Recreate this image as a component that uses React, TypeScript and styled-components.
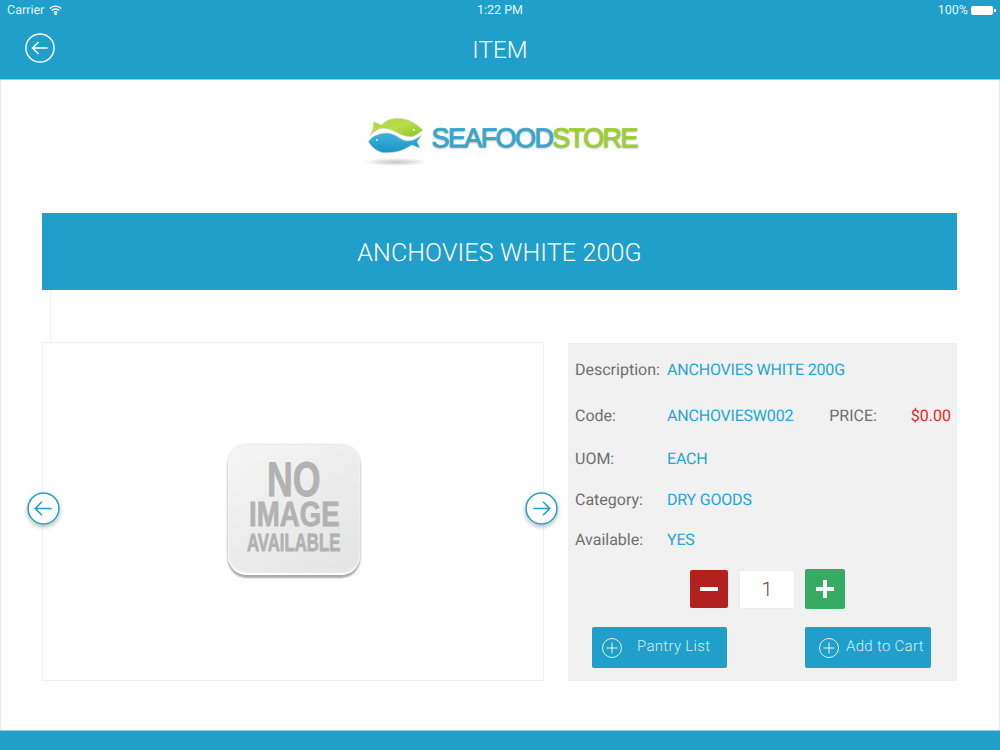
import styled, { createGlobalStyle } from 'styled-components';

const BLUE = '#1f9fc9';

const GlobalStyle = createGlobalStyle`
  html, body {
    margin: 0;
    padding: 0;
    background: #ffffff;
  }
  body {
    font-family: Roboto, "Liberation Sans", sans-serif;
    text-rendering: geometricPrecision;
  }
`;

const Page = styled.div`
  width: 1000px;
  height: 750px;
  display: flex;
  flex-direction: column;
  overflow: hidden;
`;

const Header = styled.header`
  height: 79px;
  background: ${BLUE};
  color: #ffffff;
  display: flex;
  flex-direction: column;
  border-bottom: 1px solid #8fcfe4;
`;

const StatusBar = styled.div`
  height: 20px;
  padding: 0 7px;
  display: grid;
  grid-template-columns: 1fr auto 1fr;
  align-items: center;
  font-size: 12.5px;
  color: #e6f5fa;
`;

const Carrier = styled.div`
  display: flex;
  align-items: center;
  gap: 5px;
`;

const Battery = styled.div`
  display: flex;
  align-items: center;
  justify-content: flex-end;
  gap: 3px;
`;

const BatteryBody = styled.span`
  width: 22px;
  height: 9px;
  background: #ffffff;
  border-radius: 2px;
  position: relative;
  &::after {
    content: '';
    position: absolute;
    right: -3px;
    top: 3px;
    width: 2px;
    height: 3px;
    background: #ffffff;
  }
`;

const NavBar = styled.div`
  flex: 1;
  display: grid;
  grid-template-columns: 1fr auto 1fr;
  align-items: center;
  padding: 0 25px;
`;

const NavTitle = styled.h1`
  margin: 0;
  font-size: 24px;
  font-weight: 300;
  letter-spacing: 0.2px;
`;

const BackButton = styled.div`
  width: 30px;
  height: 30px;
  margin-top: -3px;
`;

const Content = styled.main`
  flex: 1;
  border-left: 1px solid #e8e8e8;
  border-right: 1px solid #e8e8e8;
  padding: 0 42px 0 41px;
  display: flex;
  flex-direction: column;
`;

const LogoRow = styled.div`
  height: 133px;
  box-sizing: border-box;
  display: flex;
  justify-content: center;
  align-items: center;
  gap: 2px;
  padding-bottom: 9px;
`;

const LogoText = styled.div`
  width: 206px;
  white-space: nowrap;
  font-family: "Liberation Sans", Arial, sans-serif;
  font-size: 27px;
  font-weight: 400;
  letter-spacing: -1.6px;
  color: #36a6cc;
  -webkit-text-stroke: 0.8px #36a6cc;
  text-shadow: 0 1px 2px rgba(60, 60, 60, 0.6);
  margin-top: -7px;
`;

const LogoGreen = styled.span`
  color: #9ccf30;
  -webkit-text-stroke: 0.8px #9ccf30;
`;

const TitleBar = styled.div`
  height: 77px;
  box-sizing: border-box;
  padding-top: 3px;
  background: ${BLUE};
  color: #ffffff;
  display: flex;
  align-items: center;
  justify-content: center;
  font-size: 25px;
  font-weight: 300;
  letter-spacing: 0.15px;
`;

const Connector = styled.div`
  height: 52px;
  margin-left: 8px;
  border-left: 1px solid #f0f0f0;
`;

const Columns = styled.div`
  display: flex;
  gap: 24px;
  height: 339px;
`;

const ImagePanel = styled.div`
  width: 502px;
  height: 339px;
  box-sizing: border-box;
  border: 1px solid #f0f0f0;
  position: relative;
  display: flex;
  align-items: center;
  justify-content: center;
`;

const NoImage = styled.div`
  width: 132px;
  height: 130px;
  margin: 0 0 3px 2px;
  border-radius: 19px;
  background: linear-gradient(145deg, #f6f6f6 0%, #ededed 45%, #e3e3e3 100%);
  box-shadow: 0 3px 2px #a9a9a9, 0 0 3px #c4c4c4, inset 0 -2px 2px #ffffff;
  display: flex;
  flex-direction: column;
  align-items: center;
  padding-top: 13px;
  box-sizing: border-box;
  color: #b2b2b2;
  font-family: "Liberation Sans", sans-serif;
  font-weight: 700;
`;

const NoImageLine = styled.span<{ $size: number; $height: number; $squeeze: number }>`
  display: inline-block;
  white-space: nowrap;
  font-size: ${(p) => p.$size}px;
  height: ${(p) => p.$height}px;
  line-height: ${(p) => p.$height}px;
  transform: scaleX(${(p) => p.$squeeze});
  -webkit-text-stroke: 0.8px #b2b2b2;
`;

const CarouselArrow = styled.div<{ $side: 'left' | 'right' }>`
  position: absolute;
  top: 149px;
  ${(p) => (p.$side === 'left' ? 'left: -16px;' : 'right: -15px;')}
  width: 33px;
  height: 33px;
  border-radius: 50%;
  background: #ffffff;
  box-shadow: 0 2px 4px rgba(0, 0, 0, 0.28);
`;

const DetailPanel = styled.section`
  flex: 1;
  margin-top: 1px;
  background: #f1f1f1;
  padding: 0 6px 0 7px;
  display: flex;
  flex-direction: column;
  font-size: 16px;
  color: #6f6f6f;
`;

const DetailRow = styled.div<{ $height: number }>`
  height: ${(p) => p.$height}px;
  display: flex;
  align-items: center;
`;

const Label = styled.span`
  width: 92px;
  flex: none;
`;

const Value = styled.span`
  color: #2aa5cf;
  letter-spacing: -0.2px;
`;

const PriceLabel = styled.span`
  margin-left: 36px;
`;

const Price = styled.span`
  margin-left: auto;
  color: #e02a2a;
`;

const QuantityRow = styled.div`
  height: 40px;
  margin-top: 10px;
  display: flex;
  justify-content: center;
  align-items: center;
  gap: 10px;
  padding-left: 9px;
`;

const StepButton = styled.div<{ $color: string; $size: number }>`
  width: ${(p) => p.$size}px;
  height: ${(p) => p.$size}px;
  background: ${(p) => p.$color};
  border-radius: 2px;
  display: flex;
  align-items: center;
  justify-content: center;
`;

const QuantityBox = styled.div`
  width: 56px;
  height: 39px;
  margin-left: 1px;
  box-sizing: border-box;
  background: #ffffff;
  border: 1px solid #ececec;
  display: flex;
  align-items: center;
  justify-content: center;
  font-size: 20px;
  font-weight: 300;
  color: #555555;
`;

const ActionRow = styled.div`
  margin-top: 18px;
  padding: 0 20px 0 17px;
  display: flex;
  justify-content: space-between;
`;

const ActionButton = styled.div<{ $width: number; $gap: number; $inset: number }>`
  width: ${(p) => p.$width}px;
  height: 41px;
  box-sizing: border-box;
  padding-left: ${(p) => p.$inset}px;
  background: ${BLUE};
  border-radius: 2px;
  color: #d5eef6;
  display: flex;
  align-items: center;
  gap: ${(p) => p.$gap}px;
  font-size: 15px;
  font-weight: 300;
  letter-spacing: 0.3px;
`;

const ActionLabel = styled.span`
  margin-bottom: 4px;
`;

const Footer = styled.footer`
  height: 19px;
  background: ${BLUE};
  border-top: 1px solid #8fcfe4;
  margin-top: auto;
`;

function ArrowCircle({ color, dir, size }: { color: string; dir: 'left' | 'right'; size: number }) {
  return (
    <svg width={size} height={size} viewBox="0 0 32 32" fill="none" stroke={color} strokeWidth="1.5">
      <circle cx="16" cy="16" r="15" />
      {dir === 'left' ? (
        <path d="M24 16H8M14.5 9.5L8 16l6.5 6.5" />
      ) : (
        <path d="M8 16h16M17.5 9.5L24 16l-6.5 6.5" />
      )}
    </svg>
  );
}

function PlusCircle() {
  return (
    <svg width="20" height="20" viewBox="0 0 20 20" fill="none" stroke="#e4f4f9" strokeWidth="1">
      <circle cx="10" cy="10" r="9.5" />
      <path d="M10 4.5v11M4.5 10h11" />
    </svg>
  );
}

function Wifi() {
  return (
    <svg width="13" height="10" viewBox="0 0 13 10" fill="none" stroke="#ffffff" strokeWidth="1.4">
      <path d="M0.8 3.4a8.2 8.2 0 0 1 11.4 0" />
      <path d="M2.8 5.5a5.3 5.3 0 0 1 7.4 0" />
      <path d="M4.8 7.4a2.5 2.5 0 0 1 3.4 0" />
      <circle cx="6.5" cy="9" r="0.6" fill="#ffffff" />
    </svg>
  );
}

function FishLogo() {
  return (
    <svg width="68" height="54" viewBox="0 0 68 54">
      <defs>
        <linearGradient id="greenFish" x1="0" y1="0" x2="1" y2="1">
          <stop offset="0" stopColor="#a6d52e" />
          <stop offset="0.5" stopColor="#b9dd4a" />
          <stop offset="1" stopColor="#8cc425" />
        </linearGradient>
        <linearGradient id="blueFish" x1="0" y1="0" x2="0" y2="1">
          <stop offset="0" stopColor="#3fb4da" />
          <stop offset="1" stopColor="#1c93c6" />
        </linearGradient>
        <radialGradient id="fishShadow">
          <stop offset="0" stopColor="#c4c4c4" />
          <stop offset="1" stopColor="#ffffff" />
        </radialGradient>
      </defs>
      <ellipse cx="33.7" cy="47" rx="33" ry="4" fill="url(#fishShadow)" />
      <path
        d="M11.3 6.7L19.7 10C24 5.5 29 3.3 34.7 3.3 41 3.3 46 4.5 49.7 6.7 54 9 58 12 60.7 15 57 18.5 53.5 21 49.7 21.7 45 22 41 20.5 36.3 18.3 31 15.5 26 13.3 21.3 13.3 16 13.5 11.5 17 8 21L11.3 13.3z"
        fill="url(#greenFish)"
        stroke="#d5d5d5"
        strokeWidth="0.6"
      />
      <path
        d="M6.3 26.7C8.5 23.5 11.5 21 14.7 20 19 18 24 17.5 28 18.3 33 19.5 37 23 41.3 25 44.5 26 48 26 51.3 25 54.5 23.5 57.5 21.5 59.7 20L55.3 26.7 58 33.3 49.7 30C45.5 33 40 35.7 34.7 36.7 30 37.7 25.5 38 21.3 37.7 15 36.5 10 32.5 6.3 26.7z"
        fill="url(#blueFish)"
        stroke="#d5d5d5"
        strokeWidth="0.6"
      />
      <circle cx="52" cy="15" r="0.9" fill="#ffffff" />
      <circle cx="15" cy="25" r="0.9" fill="#ffffff" />
    </svg>
  );
}

export default function App() {
  return (
    <Page>
      <GlobalStyle />
      <Header>
        <StatusBar>
          <Carrier>
            Carrier <Wifi />
          </Carrier>
          <span>1:22 PM</span>
          <Battery>
            100% <BatteryBody />
          </Battery>
        </StatusBar>
        <NavBar>
          <BackButton>
            <ArrowCircle color="#ffffff" dir="left" size={30} />
          </BackButton>
          <NavTitle>ITEM</NavTitle>
        </NavBar>
      </Header>
      <Content>
        <LogoRow>
          <FishLogo />
          <LogoText>
            SEAFOOD<LogoGreen>STORE</LogoGreen>
          </LogoText>
        </LogoRow>
        <TitleBar>ANCHOVIES WHITE 200G</TitleBar>
        <Connector />
        <Columns>
          <ImagePanel>
            <NoImage>
              <NoImageLine $size={49} $height={45} $squeeze={0.73}>NO</NoImageLine>
              <NoImageLine $size={35} $height={24} $squeeze={0.79}>IMAGE</NoImageLine>
              <NoImageLine $size={25} $height={33} $squeeze={0.67}>AVAILABLE</NoImageLine>
            </NoImage>
            <CarouselArrow $side="left">
              <ArrowCircle color={BLUE} dir="left" size={33} />
            </CarouselArrow>
            <CarouselArrow $side="right">
              <ArrowCircle color={BLUE} dir="right" size={33} />
            </CarouselArrow>
          </ImagePanel>
          <DetailPanel>
            <DetailRow $height={52}>
              <Label>Description:</Label>
              <Value>ANCHOVIES WHITE 200G</Value>
            </DetailRow>
            <DetailRow $height={41}>
              <Label>Code:</Label>
              <Value>ANCHOVIESW002</Value>
              <PriceLabel>PRICE:</PriceLabel>
              <Price>$0.00</Price>
            </DetailRow>
            <DetailRow $height={44}>
              <Label>UOM:</Label>
              <Value>EACH</Value>
            </DetailRow>
            <DetailRow $height={39}>
              <Label>Category:</Label>
              <Value>DRY GOODS</Value>
            </DetailRow>
            <DetailRow $height={40}>
              <Label>Available:</Label>
              <Value>YES</Value>
            </DetailRow>
            <QuantityRow>
              <StepButton $color="#b22020" $size={38}>
                <svg width="18" height="4" viewBox="0 0 18 4">
                  <rect width="18" height="4" fill="#ffffff" />
                </svg>
              </StepButton>
              <QuantityBox>1</QuantityBox>
              <StepButton $color="#37ab63" $size={40}>
                <svg width="18" height="18" viewBox="0 0 18 18">
                  <path d="M7 0h4v7h7v4h-7v7H7v-7H0V7h7z" fill="#ffffff" />
                </svg>
              </StepButton>
            </QuantityRow>
            <ActionRow>
              <ActionButton $width={135} $gap={15} $inset={10}>
                <PlusCircle />
                <ActionLabel>Pantry List</ActionLabel>
              </ActionButton>
              <ActionButton $width={126} $gap={7} $inset={14}>
                <PlusCircle />
                <ActionLabel>Add to Cart</ActionLabel>
              </ActionButton>
            </ActionRow>
          </DetailPanel>
        </Columns>
      </Content>
      <Footer />
    </Page>
  );
}
